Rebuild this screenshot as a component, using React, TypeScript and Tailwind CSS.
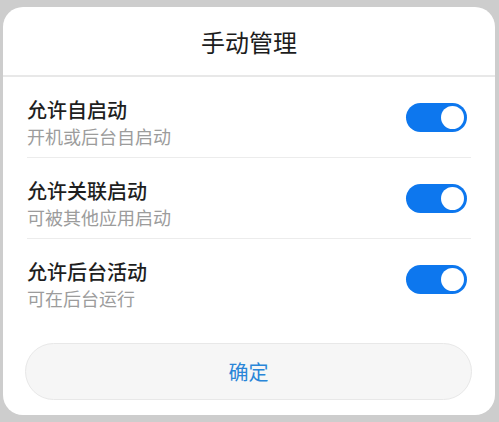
const rows = [
  { title: "允许自启动", desc: "开机或后台自启动" },
  { title: "允许关联启动", desc: "可被其他应用启动" },
  { title: "允许后台活动", desc: "可在后台运行" },
];

function Toggle() {
  return (
    <div className="flex h-[29px] w-[61px] items-center justify-end rounded-full bg-[#0d77ee] pr-[3px]">
      <div className="h-[23px] w-[23px] rounded-full bg-white" />
    </div>
  );
}

export default function App() {
  return (
    <div
      className="h-[422px] w-[499px] bg-[#cdcdcd] pl-[3px] pr-[4px] pt-[7px]"
      style={{ fontFamily: '"Noto Sans CJK SC", "Noto Sans", sans-serif' }}
    >
      <div className="flex h-[408px] flex-col rounded-[20px] bg-white">
        <div className="flex h-[70px] items-center justify-center border-b-2 border-[#e8e8e8] pt-[2px]">
          <h1 className="text-[24px] leading-none text-[#1c1c1c]">手动管理</h1>
        </div>

        <div className="px-[24px]">
          {rows.map((row, i) => (
            <div
              key={row.title}
              className={`flex h-[81px] items-center justify-between pr-[4px] ${
                i < rows.length - 1 ? "border-b border-[#ececec]" : ""
              }`}
            >
              <div className="flex flex-col pt-[11px]">
                <span className="text-[20px] font-medium leading-[27px] text-[#1e1e1e]">{row.title}</span>
                <span className="text-[18px] leading-[27px] text-[#9c9c9c]">{row.desc}</span>
              </div>
              <Toggle />
            </div>
          ))}
        </div>

        <div className="mt-[23px] px-[22px]">
          <button className="flex h-[57px] w-[447px] items-center justify-center rounded-full border border-[#e8e8e8] bg-[#f6f6f6] text-[20px] text-[#2a86d8]">
            确定
          </button>
        </div>
      </div>
    </div>
  );
}
